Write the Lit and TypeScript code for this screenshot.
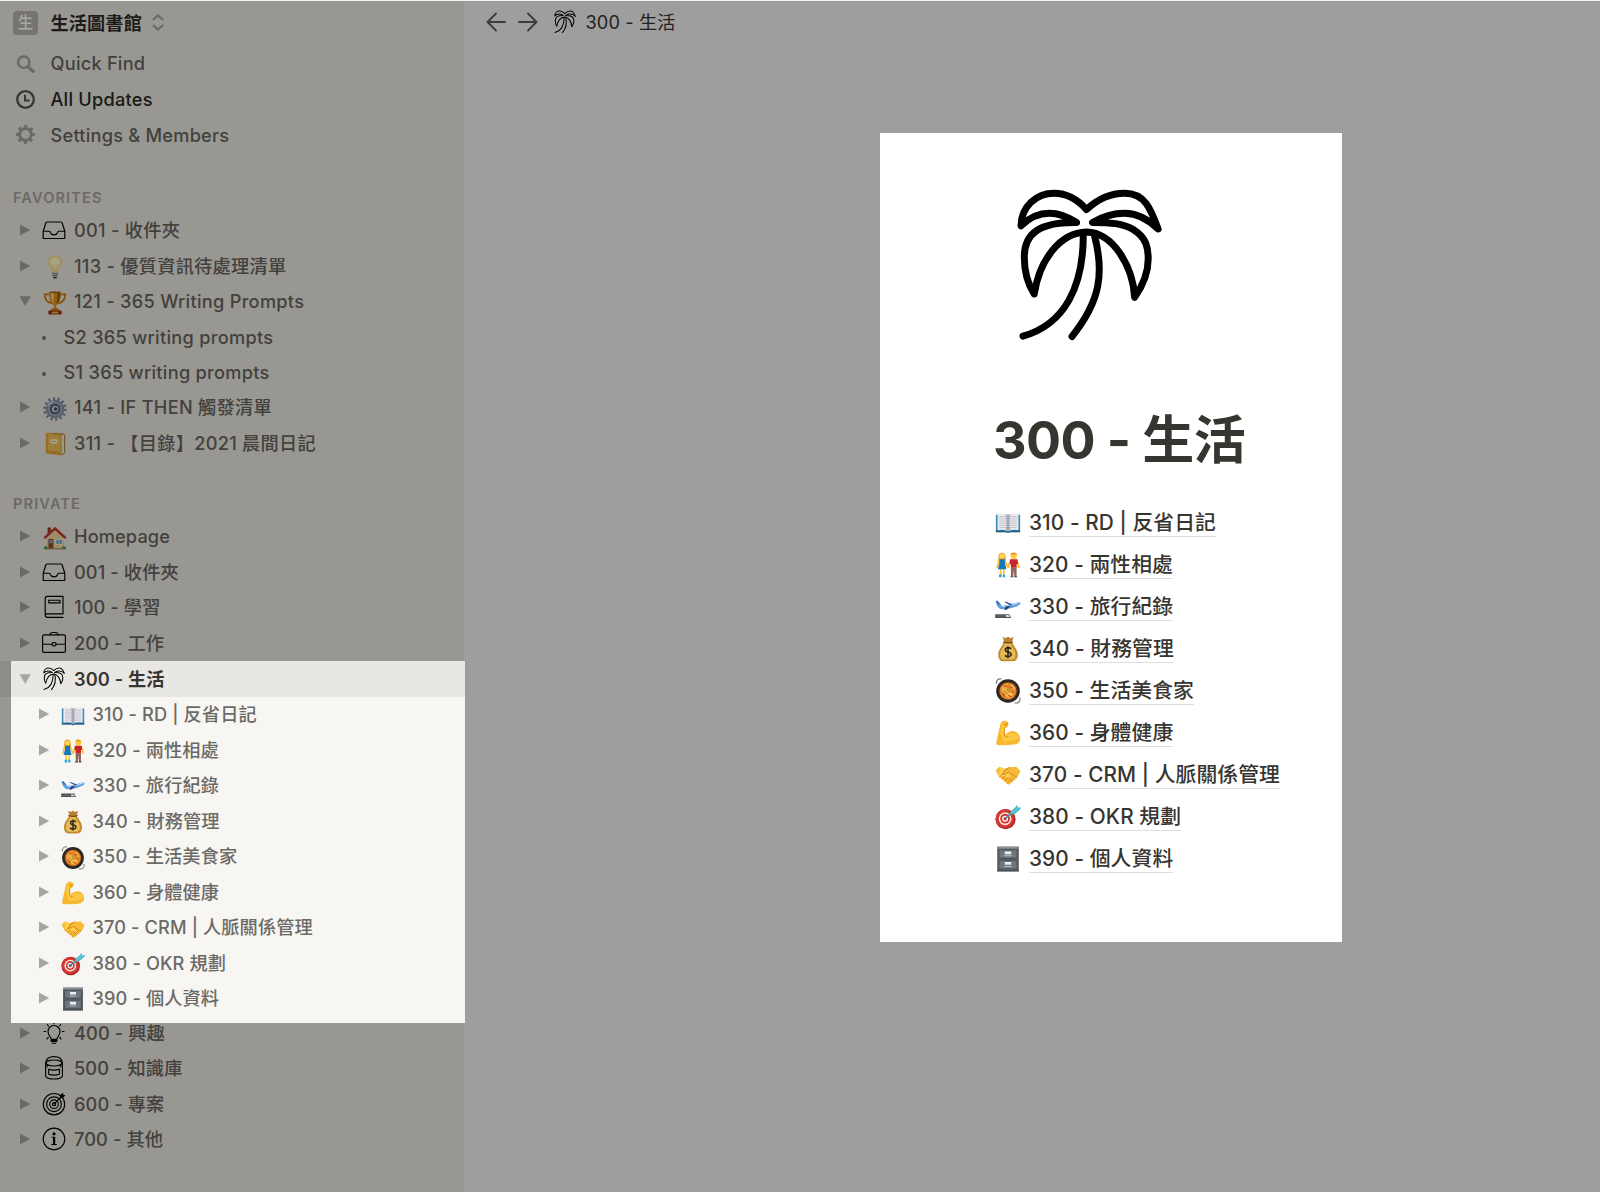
import { LitElement, html, css, svg } from "lit";
import { customElement, property } from "lit/decorators.js";
import { classMap } from "lit/directives/class-map.js";

const line = (body: unknown) => svg`<g fill="none" stroke="#000" stroke-width="1.15" stroke-linecap="round" stroke-linejoin="round">${body}</g>`;

// Every glyph is drawn on a 24 x 24 grid.
const glyphs: Record<string, unknown> = {
  palm: svg`<g transform="translate(1.2 .6) scale(.0497) translate(-110 -60)" fill="none" stroke="#000" stroke-width="21" stroke-linecap="round" stroke-linejoin="round">
    <path d="M122 168C123 110 168 70 222 70C260 70 290 86 320 119C355 86 393 70 435 70C497 70 514 118 536 178C505 147 472 130 435 130C398 130 368 140 338 158C390 158 430 160 462 180C502 205 506 237 506 268C506 312 490 348 465 384C460 290 400 189 320 187C240 189 178 270 162 374C140 340 132 300 132 262C132 190 180 156 290 158C262 140 235 130 208 130C175 130 145 145 122 168Z"/>
    <path d="M310 192C311 350 255 465 128 501M343 194C374 310 362 395 276 502"/></g>`,
  inbox: line(svg`<path d="M1.2 13.2L4 4.5Q4.4 4 5 4H19Q19.6 4 20 4.5L22.8 13.2V20.5H1.2ZM1.2 13.2H7.3Q8.3 13.4 8.7 15Q9.3 16.8 12 16.8Q14.7 16.8 15.3 15Q15.7 13.4 16.7 13.2H22.8"/>`),
  notebook: line(svg`<path d="M21 22.4H5.5Q3.2 22.2 3.2 20V3.5Q3.2 1.4 5.3 1.4H21V18.9H5.5Q3.2 19 3.2 20.7M6.8 5.2H18V7.8H6.8Z"/>`),
  briefcase: line(svg`<rect x=".6" y="3.8" width="22.8" height="17.6" rx="1.4"/><path d="M7.8 3.8Q8.2 1.7 10 1.5H14Q15.8 1.7 16.2 3.8M.6 13.2H9.9M14 13.2H23.4"/><rect x="9.9" y="11.6" width="4.2" height="3.2" rx="1.5"/>`),
  idea: line(svg`<path d="M9.2 18.4C9.2 16 6 14.5 6 10.5A6 6 0 0 1 18 10.5C18 14.5 14.8 16 14.8 18.4ZM9.3 20.4H14.7M10.2 22.2H13.8M12 1V2.6M5.3 3.6L6.5 5M18.7 3.6L17.5 5M2 10.5H3.7M20.3 10.5H22M5 17.8L6.2 16.5M19 17.8L17.8 16.5"/><path d="M9.5 19.5H14.5" stroke-width="2"/>`),
  database: line(svg`<path d="M3.6 7.2C4 3 7.5.7 12 .7S20 3 20.4 7.2V20C19 24 5 24 3.6 20Z"/><ellipse cx="12" cy="7" rx="8" ry="3"/><path d="M6.6 13.3Q12 15 17.4 13.3V18.3Q12 20 6.6 18.3ZM5.2 9V11M18.8 9V11"/>`),
  target: line(svg`<circle cx="12" cy="12.2" r="10.7"/><circle cx="12" cy="12.2" r="7.4"/><circle cx="12" cy="12.2" r="4.3"/><circle cx="12" cy="12.2" r="1.6"/><path d="M12 12.2L20.5 3.7"/><path d="M18.2 5.8L18.7 3.5L20.6 1.6L21 3.2L22.5 3.5L20.6 5.4Z" fill="#000"/>`),
  info: svg`<circle cx="12" cy="12" r="10.8" fill="none" stroke="#000" stroke-width="1.15"/><circle cx="12" cy="6.8" r="1.6"/><path d="M9.6 9.7H13.2V17H14.8V18H9.4V17H11V10.7H9.6Z"/>`,
  bulb: svg`<path d="M12 .6C7.6.6 5 3.8 5 7.6C5 11.3 8.4 13 9 17.4H15C15.6 13 19 11.3 19 7.6C19 3.8 16.4.6 12 .6Z" fill="#f7d98a"/><path d="M12 2.2C9 2.2 7 4.4 7 7.2C7 9.8 9.4 12 10.4 15.8H13.6C14.6 12 17 9.8 17 7.2C17 4.4 15 2.2 12 2.2Z" fill="#fff3c4"/><path d="M10 9.5L11.3 16M14 9.5L12.7 16" stroke="#e6b95c" stroke-width=".7" fill="none"/><path d="M9 17.2H15V20.6Q14.8 21.6 13.8 21.8V23H10.2V21.8Q9.2 21.6 9 20.6Z" fill="#b9bcc0"/><path d="M9 18.8H15M9 20.5H15" stroke="#777b80" stroke-width=".8"/><path d="M10.2 22H13.8V23.3H10.2Z" fill="#333"/>`,
  trophy: svg`<path d="M6.6 3.4H1.6C1.8 8.2 4 11.2 8.6 12.4M17.4 3.4H22.4C22.2 8.2 20 11.2 15.4 12.4" fill="none" stroke="#c47c12" stroke-width="1.7"/><path d="M6 .8H18C18 8 16.8 12.6 13.2 14.4L13.4 18H10.6L10.8 14.4C7.2 12.6 6 8 6 .8Z" fill="#dc9420"/><path d="M8 2H10.6V12.4C8.8 10 8 7 8 2Z" fill="#ffd568"/><path d="M14.6 2H17.2C17 7.5 16.2 10.6 13.4 12.9Q14.8 8 14.6 2Z" fill="#9a5409"/><ellipse cx="12" cy="1.4" rx="6" ry=".9" fill="#a05f0e"/><path d="M8.6 17.6H15.4L16.8 20H7.2Z" fill="#c97b16"/><path d="M5.4 19.6H18.6V23.4H5.4Z" fill="#8c2e16"/><path d="M8.6 20.6H15.4V22.4H8.6Z" fill="#f0bd43"/>`,
  gear: svg`<circle cx="12" cy="12" r="10" fill="none" stroke="#75849a" stroke-width="3.6" stroke-dasharray="2 2.488"/><circle cx="12" cy="12" r="9.3" fill="#8593a8"/><circle cx="12" cy="12" r="7" fill="#9dabbd"/><circle cx="12" cy="12" r="5.2" fill="#4a586d"/><circle cx="12.2" cy="12" r="3.3" fill="#c9d1da"/><circle cx="12.6" cy="12" r="1.7" fill="#39465a"/><path d="M4.8 9Q6.8 4.8 11 4.2" fill="none" stroke="#dfe6ee" stroke-width="1.1"/>`,
  ledger: svg`<path d="M20.4 1.8L22 2.4V20.8L18.6 23.5V4Z" fill="#eee8d0"/><path d="M21.7 2.5V20.7L18.8 23" fill="none" stroke="#8e6820" stroke-width=".9"/><path d="M4 .8L18.7 3.1V23.6L2.8 21.2V2Z" fill="#dfa236"/><path d="M4.8 1.8L17.4 3.7V19.8L4.8 18.5Z" fill="#eebf55"/><path d="M4 .8L20.7 1.5L22 2.4L18.7 3.1Z" fill="#bd8425"/><ellipse cx="11" cy="9.4" rx="3.6" ry="2.3" fill="#fff2cf"/><path d="M9 9.2L12.8 9.6" stroke="#9b957f" stroke-width=".8"/>`,
  house: svg`<path d="M4.6 1.5H7.8V8H4.6Z" fill="#9f3329"/><path d="M3 11L12 3L21 11V23H3Z" fill="#f1d39c"/><path d="M12 .8L23.5 11.2L22 13L12 4L2 13L.5 11.2Z" fill="#c73b31"/><path d="M2.8 11.5L12 3.3L21.2 11.5" fill="none" stroke="#76332b" stroke-width=".8"/><path d="M5.4 13H10.4V23H5.4Z" fill="#8b5130"/><path d="M6.4 14.2H9.4V17.2H6.4Z" fill="#6faed6"/><path d="M12.5 13H19.5V18.8H12.5Z" fill="#fff2cf"/><path d="M13.3 13.8H18.8V18H13.3Z" fill="#5fa9dc"/><path d="M16 13.5V18.4" stroke="#fff2cf" stroke-width=".7"/><path d="M1 23.2V21.5Q3 18.5 5 22V23.2ZM18.5 23.2Q19.5 19 21.5 20.5Q23 20.8 23.3 23.2Z" fill="#4c9a3d"/><path d="M4 22.2H19V23.4H4Z" fill="#9e8165"/>`,
  book: svg`<path d="M.8 4.4H23.2V20.5H.8Z" fill="#3f8fb5"/><path d="M.8 18.7H23.2V20.5H13.4L12 21.4L10.6 20.5H.8Z" fill="#246586"/><path d="M2.4 3.5Q9 2.5 12 4.8Q15 2.5 21.6 3.5V18.6Q15 17.6 12 19.7Q9 17.6 2.4 18.6Z" fill="#ececf0"/><path d="M9.6 3.6Q11.4 4 12 4.8V19.7Q11 18.5 9.6 18.3ZM14.4 3.6Q12.6 4 12 4.8V19.7Q13 18.5 14.4 18.3Z" fill="#bfc0ca"/><path d="M12 4.8V19.8" stroke="#777985" stroke-width=".7"/><path d="M4 6.2H9M4 8.2H9M4 10.2H9M4 12.2H9M4 14.2H9M4 16.2H9M15 6.2H20M15 8.2H20M15 10.2H20M15 12.2H20M15 14.2H20M15 16.2H20" stroke="#b2b3be" stroke-width=".7"/>`,
  couple: svg`<path d="M3.2 5.4Q3 .6 6.5.6Q10 .6 9.8 5.4L10.2 7.3H2.8Z" fill="#f2a51d"/><circle cx="6.5" cy="4" r="2.3" fill="#ffd55d"/><circle cx="17.3" cy="3.7" r="2.9" fill="#ffc83d"/><path d="M14.3 3.3Q14.3.4 17.3.4Q20.4.4 20.3 3.3L19.5 2.2H15.2Z" fill="#e99116"/><path d="M3.8 7.4L2 14M9 7.5L11.5 13.5M14.4 7.8L12.2 14M20.2 7.8L22 14" stroke="#fbbd31" stroke-width="1.7" stroke-linecap="round"/><path d="M4.5 15H6V22.5H4.5ZM7.4 15H8.9V22.5H7.4Z" fill="#fbbd31"/><path d="M4.1 6.7H9.1L9.2 10.5L10.6 16H2.7L4 10.5Z" fill="#1876bd"/><path d="M3.8 20.7H6.2V23.4H3.5ZM7.2 20.7H9.4V23.4H7.2Z" fill="#35a8d8"/><path d="M13.9 6.8H20.7L21.2 11H20V14.6H14.6V11H13.4Z" fill="#c8232c"/><path d="M14.6 14.3H20L19.9 22.7H17.9L17.4 16.5L16.8 22.7H14.8Z" fill="#8f6558"/><path d="M14.2 22.3H16.9V23.4H14.2ZM17.8 22.3H20.3V23.4H17.8Z" fill="#423b3b"/>`,
  plane: svg`<path d="M.6 6.3L2.4 6.3L6.3 10.8L1.8 9.3Z" fill="#2e6dc4"/><path d="M1 9.4L2.6 9.2L6.6 11Q14 9.8 20.8 7.8Q23.6 7.2 23.7 8.4Q23.6 9.8 20.8 11Q11 14.9 5.5 14Q3.5 13.4 1 9.4Z" fill="#5e9fe4"/><path d="M6.6 11Q14 9.8 20.8 7.8Q22.8 7.4 23.4 7.9Q14 12 7 12Z" fill="#b4d5f5"/><path d="M8.4 7.4L10.3 7.2L16.6 9.7L14.4 10.5Z" fill="#315ba1"/><path d="M14.5 10.5L10.6 14.6L8.6 14.8L10 11.6Z" fill="#273b69"/><path d="M.2 18.6H13.2L15 22.1H.2Z" fill="#4e5156"/><path d="M10 19.4H12.7L14 21.3H10Z" fill="#d3d5d7"/><path d="M1.2 20.2H8.5" stroke="#777b82" stroke-width=".6"/>`,
  money: svg`<path d="M7 .8L9.5 2L12 .7L14.5 2L17.2.8L15.3 6H8.8Z" fill="#b48031"/><path d="M8.2 5H15.8C16.3 9 21.5 12 21 18Q20.6 23.3 16.5 23.4H7.5Q3.4 23.3 3 18C2.5 12 7.7 9 8.2 5Z" fill="#c08a30"/><path d="M9 7H14.5C15.4 11 19.5 13 18.9 18Q18.5 21.5 15.5 21.8H8Q5 21.5 4.8 17.5C4.6 13 8 11 9 7Z" fill="#e5bb58"/><path d="M7.5 5.4Q12 7.2 16.5 5.4" fill="none" stroke="#744c15" stroke-width="1.3"/><path d="M15 11.8Q12 9.8 9.8 11.6Q8.7 14 12 14.8Q15.8 15.7 14.6 18Q12.5 20.2 9 18M12 9.4V20.6" fill="none" stroke="#2f2918" stroke-width="1.5"/>`,
  paella: svg`<path d="M6 1Q1.2 0 1.2 5.5M18 23Q23.8 23.8 23 18" fill="none" stroke="#777" stroke-width="1"/><circle cx="12" cy="12" r="10.9" fill="#2a2724"/><circle cx="12" cy="12" r="8.4" fill="#8c481c"/><circle cx="12" cy="12" r="7.7" fill="#e08526"/><path d="M6 10Q8 5 12 5.4L10 9L14 11L9 15L6.5 13Z" fill="#f4ae45"/><path d="M14 6Q18 7 18.6 11L15 10ZM9 16L14 13L17 15L13 19Z" fill="#fbbd52"/><path d="M8 8L11 7M13.5 8L16.5 9.5M7 14L9 17M12 16L15 17.5" stroke="#c74d1d" stroke-width="1.2"/><path d="M11 11H12.5M16 13H17.2M9 12V13" stroke="#5d8a32" stroke-width="1.1"/>`,
  arm: svg`<path d="M7.8 1Q9.2.1 10.4 1.2Q12.8 1.6 12.4 4L11.5 6.5Q10.2 8 8.8 7.4L9 14Q14.5 8.5 19.5 11.1Q24 14 22.8 19.3Q22 22.2 16.8 22.7Q8.5 23.6 2.2 23Q.8 22.8 1.2 20.5L4.6 5.6Q5 1.6 7.8 1Z" fill="#f7b72e"/><path d="M4.8 12L6 6.2Q6.7 2.2 8.6 1.6L8.2 8.5L8 15.7Q14 11 19 12.4Q22.5 14 21.8 17.4Q15 20 8 20Z" fill="#ffcf4b" opacity=".75"/><path d="M8 4.2Q9.6 5.2 11.8 3.6M8.6 7.2L8.8 14.5Q10 16.4 12.3 15.8" fill="none" stroke="#d98a16" stroke-width=".9"/>`,
  handshake: svg`<path d="M.6 7.5L4.2 4.4L9 6.2L13 4.8L19.6 4.4L23.5 8.4L20.8 13.8L13.7 20.2Q12.4 21.4 11.2 19.8L3.6 13.6Z" fill="#f8b934"/><path d="M4.2 4.9L9 6.5L7 11.3Q8.8 12.2 12.1 9.5L20 14.3L18.8 15.3L3.8 13Z" fill="#ffcf52"/><path d="M13 5Q8 7.6 7 11.4Q9.4 12 12.3 9.4L19.8 14.4M4.6 13.4L6.5 11.7M6.8 15.3L9.2 13.2M9 17.4L11.3 15.4M11.2 19.5L13.2 17.4M12.8 14.8L16 17.8M15 12.8L18 16" fill="none" stroke="#cc8117" stroke-width=".9" stroke-linecap="round"/>`,
  dart: svg`<circle cx="9.7" cy="14" r="9.3" fill="#a92026"/><circle cx="9.3" cy="13.5" r="8.6" fill="#d63730"/><circle cx="9.3" cy="13.6" r="5.9" fill="#f6eae8"/><circle cx="9.3" cy="13.6" r="4.5" fill="#d8352f"/><circle cx="9.3" cy="13.6" r="2.8" fill="#fff1ef"/><circle cx="9.3" cy="13.6" r="1.5" fill="#c82a2b"/><path d="M9.3 13.6L18.3 5.5" stroke="#2c95a9" stroke-width="1.5"/><path d="M13.4 10L14.6 6.9L19.5 2.4L20.4.6L21.2 3.4L24 3L23.3 4.8L18.8 8.8Z" fill="#45b8c9"/><path d="M14.8 8.8L21.3 3.8" stroke="#8fdbe4" stroke-width=".7"/>`,
  cabinet: svg`<path d="M2 .6H22V23H2Z" fill="#5b6469"/><path d="M2 .6H22V2.5H2Z" fill="#899298"/><path d="M3.6 3.4H20.4V11.4H3.6ZM3.6 13.2H20.4V21.4H3.6Z" fill="#6d777d" stroke="#434c51" stroke-width=".8"/><path d="M9 5H15V7.6H9ZM9 14.8H15V17.4H9Z" fill="#eef0f0"/><path d="M8.6 8.6H15.4V9.5H8.6ZM8.6 18.4H15.4V19.3H8.6Z" fill="#bcc2c5"/><path d="M2 22.6H22V23.6H2Z" fill="#343b3f"/>`,
};

@customElement("page-glyph")
class PageGlyph extends LitElement {
  @property() name = "";
  static styles = css`
    :host { display: block; flex: none; width: 24px; height: 24px; }
    .art { display: block; width: 100%; height: 100%; overflow: visible; }
  `;
  render() {
    return html`<svg class="art" viewBox="0 0 24 24">${glyphs[this.name]}</svg>`;
  }
}

interface Page { icon: string; title: string; open?: boolean; }

const favorites: Page[] = [
  { icon: "inbox", title: "001 - 收件夾" },
  { icon: "bulb", title: "113 - 優質資訊待處理清單" },
  { icon: "trophy", title: "121 - 365 Writing Prompts", open: true },
  { icon: "", title: "S2 365 writing prompts" },
  { icon: "", title: "S1 365 writing prompts" },
  { icon: "gear", title: "141 - IF THEN 觸發清單" },
  { icon: "ledger", title: "311 - 【目錄】2021 晨間日記" },
];
const before: Page[] = [
  { icon: "house", title: "Homepage" },
  { icon: "inbox", title: "001 - 收件夾" },
  { icon: "notebook", title: "100 - 學習" },
  { icon: "briefcase", title: "200 - 工作" },
];
const life: Page[] = [
  { icon: "book", title: "310 - RD | 反省日記" },
  { icon: "couple", title: "320 - 兩性相處" },
  { icon: "plane", title: "330 - 旅行紀錄" },
  { icon: "money", title: "340 - 財務管理" },
  { icon: "paella", title: "350 - 生活美食家" },
  { icon: "arm", title: "360 - 身體健康" },
  { icon: "handshake", title: "370 - CRM | 人脈關係管理" },
  { icon: "dart", title: "380 - OKR 規劃" },
  { icon: "cabinet", title: "390 - 個人資料" },
];
const after: Page[] = [
  { icon: "idea", title: "400 - 興趣" },
  { icon: "database", title: "500 - 知識庫" },
  { icon: "target", title: "600 - 專案" },
  { icon: "info", title: "700 - 其他" },
];

const outlined = new Set(["inbox", "notebook", "briefcase", "idea", "database", "target", "info"]);

@customElement("app-root")
class AppRoot extends LitElement {
  static styles = css`
    :host {
      display: block; box-sizing: border-box; width: 1600px; height: 1192px; overflow: hidden;
      border-top: 1px solid #f4f4f4; background: #9e9e9e;
      font-family: Inter, "Noto Sans CJK TC", sans-serif; font-size: 18.2px; font-weight: 500;
      font-feature-settings: "calt" 0;
      line-height: 24px; color: #42413d; white-space: nowrap;
    }
    .shell { display: flex; height: 1191px; }
    .side { flex: none; width: 464px; background: #999791; box-sizing: border-box; }
    .space { display: flex; align-items: center; height: 43px; padding-left: 13px; }
    .badge { width: 25px; height: 24px; border-radius: 4px; background: #75746f; color: #a9a8a3; font-size: 15.5px; text-align: center; }
    .space-name { margin-left: 12.5px; color: #1d1c18; font-weight: 600; letter-spacing: .1px; }
    .updown { width: 12px; height: 17px; margin-left: 10px; }
    .tools { padding-top: 1.7px; letter-spacing: .23px; }
    .tool { display: flex; align-items: center; height: 35.6px; padding-left: 16px; }
    .tool-icon { width: 19px; height: 19px; margin-right: 15.5px; flex: none; }
    .current { color: #1a1916; }
    .label { font-size: 14.6px; font-weight: 600; letter-spacing: 1.1px; color: #6b6a66; padding-left: 13px; height: 24px; }
    .label-fav { margin-top: 33.1px; }
    .label-priv { margin-top: 31.2px; }
    .list-fav { padding-top: 3.2px; letter-spacing: .28px; }
    .list-priv { padding-top: 2.9px; letter-spacing: .12px; }
    .row { display: flex; align-items: center; height: 35.4px; padding-left: 19px; box-sizing: border-box; }
    .list-priv .row { height: 35.48px; }
    .tri { flex: none; width: 12px; height: 12px; margin-right: 11px; fill: #6a6965; }
    .row page-glyph { margin-right: 8px; }
    .emoji { position: relative; top: 1.5px; left: .5px; }
    .dim page-glyph { filter: brightness(.66); }
    .bullet { flex: none; width: 4px; height: 4px; border-radius: 50%; background: #4c4b47; margin: 3px 17.5px 0 23px; }
    .lit { position: relative; z-index: 1; margin: .6px -1px -8px 11px; padding-bottom: 7.4px; background: #f7f6f3; color: #6b6a66; }
    .lit .row { padding-left: 26.5px; }
    .lit .tri { fill: #a6a5a1; }
    .lit .row.active { padding-left: 8px; background: #e8e7e4; box-shadow: -11px 0 0 #8c8d88; color: #37352f; font-weight: 600; }
    .body { flex: 1; min-width: 0; }
    .crumbs { display: flex; align-items: center; height: 42px; padding-left: 21.5px; color: #22211e; font-weight: 400; letter-spacing: .1px; }
    .arrow { width: 20px; height: 20px; margin-right: 12px; fill: none; stroke: #3c3b39; stroke-width: 1.9; stroke-linecap: round; stroke-linejoin: round; }
    .crumbs page-glyph { margin: 0 9px 0 3px; }
    .card { box-sizing: border-box; width: 462px; height: 809.5px; margin: 89.5px 0 0 416px; padding: 56px 0 0 115px; background: #fff; color: #37352f; }
    .card .hero { width: 160px; height: 160px; margin-left: 14px; margin-top: -3px; }
    .title { font-size: 52px; font-weight: 700; line-height: 64px; letter-spacing: -.55px; margin: 63.5px 0 0 -2px; }
    .entries { padding-top: 28.8px; font-size: 20.8px; font-weight: 500; letter-spacing: .08px; }
    .entry { display: flex; align-items: center; height: 42.02px; }
    .entry page-glyph { width: 26px; height: 26px; margin-right: 8px; }
    .link { line-height: 27px; border-bottom: 1.3px solid #dededc; }
  `;

  private tri(open = false) {
    return html`<svg class="tri" viewBox="0 0 12 12"><path d=${open ? "M.5 1.2H11.8L6.2 10.9Z" : "M1 .6V11.4L11.2 6Z"} /></svg>`;
  }

  private row(p: Page) {
    if (!p.icon) return html`<div class="row"><span class="bullet"></span><span>${p.title}</span></div>`;
    return html`<div class="row">${this.tri(p.open)}<page-glyph class=${classMap({ emoji: !outlined.has(p.icon) })} name=${p.icon}></page-glyph><span>${p.title}</span></div>`;
  }

  private rows(list: Page[]) {
    return list.map((p) => this.row(p));
  }

  render() {
    return html`<div class="shell">
      <nav class="side">
        <div class="space">
          <span class="badge">生</span><span class="space-name">生活圖書館</span>
          <svg class="updown" viewBox="0 0 12 17" fill="none" stroke="#6a6965" stroke-width="2"><path d="M.8 6L6 1.4L11.2 6M.8 11L6 15.6L11.2 11" /></svg>
        </div>
        <div class="tools">
          <div class="tool"><svg class="tool-icon" viewBox="0 0 19 19" fill="none" stroke="#6a6965"><circle cx="7.7" cy="8.2" r="5.7" stroke-width="2.4" /><path d="M12 12.6L18 18.3" stroke-width="3.1" /></svg><span>Quick Find</span></div>
          <div class="tool current"><svg class="tool-icon" viewBox="0 0 19 19" fill="none" stroke="#383733" stroke-width="2.3"><circle cx="9.5" cy="9.5" r="8.3" /><path d="M9 4.8V10.4H13.6" stroke-width="2" /></svg><span>All Updates</span></div>
          <div class="tool"><svg class="tool-icon" viewBox="0 0 19 19" fill="none" stroke="#6a6965"><circle cx="9.5" cy="9.5" r="5.9" stroke-width="3" /><circle cx="9.5" cy="9.5" r="8" stroke-width="3" stroke-dasharray="2.8 3.483" stroke-dashoffset="1.4" /></svg><span>Settings &amp; Members</span></div>
        </div>
        <div class="label label-fav">FAVORITES</div>
        <div class="list-fav dim">${this.rows(favorites)}</div>
        <div class="label label-priv">PRIVATE</div>
        <div class="list-priv">
          <div class="dim">${this.rows(before)}</div>
          <div class="lit">
            <div class="row active">${this.tri(true)}<page-glyph name="palm"></page-glyph><span>300 - 生活</span></div>
            ${this.rows(life)}
          </div>
          <div class="dim">${this.rows(after)}</div>
        </div>
      </nav>
      <main class="body">
        <div class="crumbs">
          <svg class="arrow" viewBox="0 0 20 20"><path d="M19 10H1.5M10 1.5L1.5 10L10 18.5" /></svg>
          <svg class="arrow" viewBox="0 0 20 20"><path d="M1 10H18.5M10 1.5L18.5 10L10 18.5" /></svg>
          <page-glyph name="palm"></page-glyph><span>300 - 生活</span>
        </div>
        <article class="card">
          <page-glyph class="hero" name="palm"></page-glyph>
          <h1 class="title">300 - 生活</h1>
          <div class="entries">
            ${life.map((p) => html`<div class="entry"><page-glyph name=${p.icon}></page-glyph><span class="link">${p.title}</span></div>`)}
          </div>
        </article>
      </main>
    </div>`;
  }
}
